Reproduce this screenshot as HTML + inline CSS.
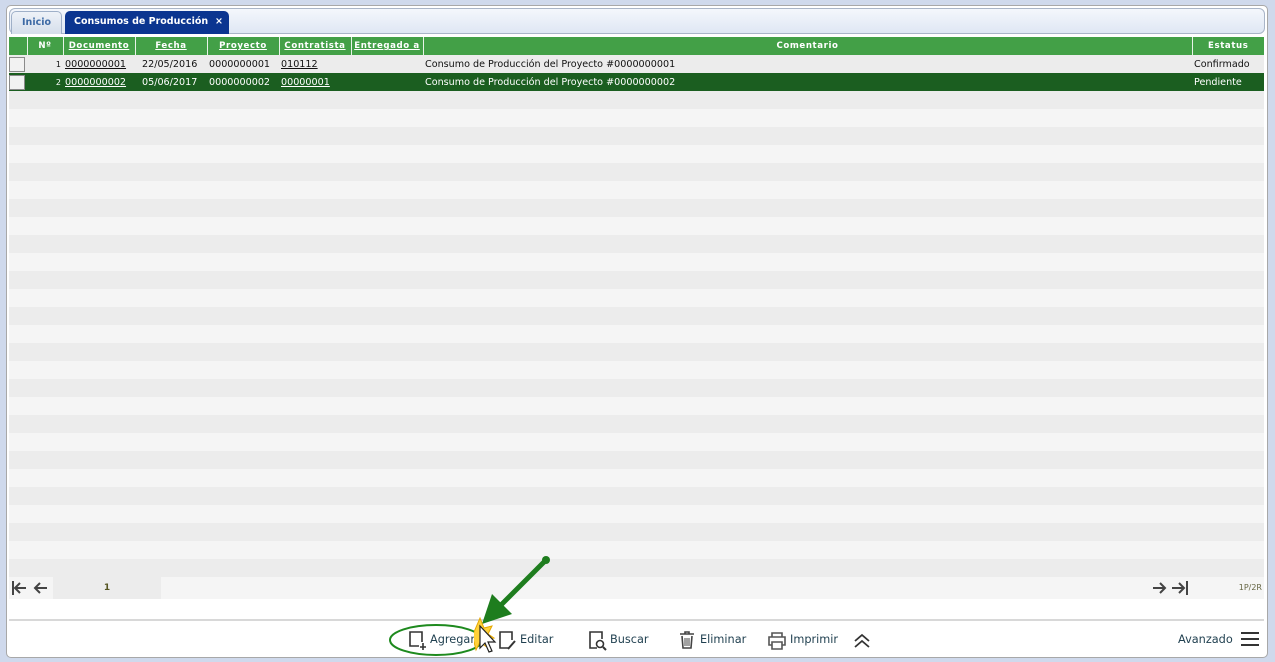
<!DOCTYPE html>
<html><head><meta charset="utf-8"><style>
*{margin:0;padding:0;box-sizing:border-box}
body{width:1275px;height:662px;background:#cfd9ec;font-family:"DejaVu Sans","Liberation Sans",sans-serif;position:relative;overflow:hidden}
.panel{position:absolute;left:6px;top:5px;width:1262px;height:653px;background:#fff;border:1px solid #a8a8a8;border-radius:5px}
.tabbar{position:absolute;left:9px;top:8px;width:1256px;height:26px;border:1px solid #a9b5c8;border-radius:6px;background:linear-gradient(#f4f7fc,#dfe7f4)}
.tab{position:absolute;top:11px;height:23px;border-radius:5px 5px 0 0;font-size:9.5px;font-weight:bold;line-height:22px}
.t1{left:11px;width:51px;border:1px solid #9fb0c8;border-bottom:none;background:linear-gradient(#eef2f8,#d5deeb);color:#3d6aa5;text-align:center}
.t2{left:65px;width:164px;background:#0b3590;color:#fff;padding-left:9px}
.t2 span{position:absolute;right:6px}
table{position:absolute;left:9px;top:37px;border-collapse:collapse;table-layout:fixed;width:1255px}
td,th{height:18px;font-size:9.6px;white-space:nowrap;overflow:hidden;padding:0 2px}
th{background:#43a047;color:#fff;font-size:8.6px;letter-spacing:.6px;border-right:1px solid #e8f3e8;text-decoration:underline}
th.nu{text-decoration:none}
tr.r1 td{background:#ececec;color:#111}
tr.r2 td{background:#1b5e20;color:#fff}
td a{color:inherit;text-decoration:underline}
.cb{display:block;width:16px;height:15px;border:1px solid #8a8a8a;background:#f2f2f2;margin-left:0}
.stripes{position:absolute;left:9px;top:91px;width:1255px;height:486px;background:repeating-linear-gradient(#ececec 0 18px,#f5f5f5 18px 36px)}
.pager{position:absolute;left:9px;top:577px;width:1255px;height:22px;background:#f5f5f5}
.pg1{position:absolute;left:44px;top:0;width:108px;height:22px;background:#ececec;font-size:9px;font-weight:bold;color:#552;line-height:22px;text-align:center}
.line{position:absolute;left:9px;top:619px;width:1255px;height:2px;background:#d8d8d8}
.btn{position:absolute;top:633px;font-size:11.3px;color:#1f3f4f;font-family:"DejaVu Sans",sans-serif}
svg{position:absolute}
</style></head><body>
<div class="panel"></div>
<div class="tabbar"></div>
<div class="tab t1">Inicio</div>
<div class="tab t2">Consumos de Producción<span>×</span></div>
<table>
<colgroup><col style="width:18px"><col style="width:36px"><col style="width:72px"><col style="width:72px"><col style="width:72px"><col style="width:72px"><col style="width:72px"><col style="width:769px"><col style="width:72px"></colgroup>
<tr><th class="nu"></th><th class="nu">Nº</th><th>Documento</th><th>Fecha</th><th>Proyecto</th><th>Contratista</th><th>Entregado a</th><th class="nu">Comentario</th><th class="nu" style="border:none">Estatus</th></tr>
<tr class="r1"><td style="padding:0"><span class="cb"></span></td><td style="text-align:right;font-size:8px">1</td><td><a>0000000001</a></td><td style="padding-left:7px">22/05/2016</td><td>0000000001</td><td><a>010112</a></td><td></td><td>Consumo de Producción del Proyecto #0000000001</td><td>Confirmado</td></tr>
<tr class="r2"><td style="padding:0"><span class="cb"></span></td><td style="text-align:right;font-size:8px">2</td><td><a>0000000002</a></td><td style="padding-left:7px">05/06/2017</td><td>0000000002</td><td><a>00000001</a></td><td></td><td>Consumo de Producción del Proyecto #0000000002</td><td>Pendiente</td></tr>
</table>
<div class="stripes"></div>
<div class="pager"><div class="pg1">1</div><div style="position:absolute;right:2px;top:6px;font-size:8px;color:#664">1P/2R</div></div>
<svg style="left:11px;top:579px" width="40" height="18" viewBox="0 0 40 18"><g stroke="#444" stroke-width="2" fill="none"><path d="M2 2v14M15 9H4M9 4L4 9l5 5"/><path d="M36 9H24M29 4l-5 5 5 5"/></g></svg>
<svg style="left:1150px;top:579px" width="40" height="18" viewBox="0 0 40 18"><g stroke="#444" stroke-width="2" fill="none"><path d="M3 9h12M10 4l5 5-5 5"/><path d="M22 9h12M29 4l5 5-5 5M37 2v14"/></g></svg>
<div class="line"></div>
<svg style="left:388px;top:623px" width="100" height="36"><ellipse cx="48" cy="17" rx="46" ry="15" fill="none" stroke="#1e8a1e" stroke-width="2"/></svg>
<svg style="left:408px;top:630px" width="20" height="22"><path d="M11 16H2V2h12v10" fill="none" stroke="#333" stroke-width="1.6"/><path d="M15 13v7M12 17h6" stroke="#333" stroke-width="1.6"/></svg>
<div class="btn" style="left:430px">Agregar</div>
<svg style="left:498px;top:630px" width="20" height="22"><path d="M11 18H2V2h12v8" fill="none" stroke="#333" stroke-width="1.6"/><path d="M10 19l7-8" stroke="#333" stroke-width="2"/></svg>
<div class="btn" style="left:520px">Editar</div>
<svg style="left:588px;top:630px" width="22" height="22"><path d="M9 18H2V2h12v7" fill="none" stroke="#333" stroke-width="1.6"/><circle cx="12" cy="14" r="3.5" fill="none" stroke="#333" stroke-width="1.6"/><path d="M15 17l3 3" stroke="#333" stroke-width="2"/></svg>
<div class="btn" style="left:610px">Buscar</div>
<svg style="left:678px;top:630px" width="20" height="22"><path d="M2 4h14M7 4V2h4v2M4 6l1 12h8l1-12" fill="none" stroke="#444" stroke-width="1.6"/><path d="M7 8v8M9 8v8M11 8v8" stroke="#444"/></svg>
<div class="btn" style="left:700px">Eliminar</div>
<svg style="left:767px;top:630px" width="20" height="22"><path d="M5 7V3h10v4M5 15H2V7h16v8h-3M5 12h10v7H5z" fill="none" stroke="#555" stroke-width="1.6"/></svg>
<div class="btn" style="left:790px">Imprimir</div>
<svg style="left:852px;top:632px" width="20" height="18"><path d="M3 9l7-6 7 6M3 15l7-6 7 6" fill="none" stroke="#333" stroke-width="1.8"/></svg>
<svg style="left:474px;top:556px" width="78" height="104"><path d="M72 4L20 56" stroke="#1e7d1e" stroke-width="5"/><circle cx="72" cy="4" r="4" fill="#1e7d1e"/><path d="M8 68l30-10-20-20z" fill="#1e7d1e"/><path d="M6 62l4 10 8-2-4 8 6 4-8 2 2 8-8-6-4 8-2-8-8 2 6-6-6-4 8-2z" fill="#ffd23a" stroke="#e6a700"/><path d="M6 70v22l5-5 4 9 3-1-4-9h7z" fill="#fff" stroke="#222" stroke-width="1.2"/></svg>
<div class="btn" style="left:1178px">Avanzado</div>
<svg style="left:1240px;top:631px" width="20" height="16"><path d="M1 2h18M1 8h18M1 14h18" stroke="#333" stroke-width="2"/></svg>
</body></html>
